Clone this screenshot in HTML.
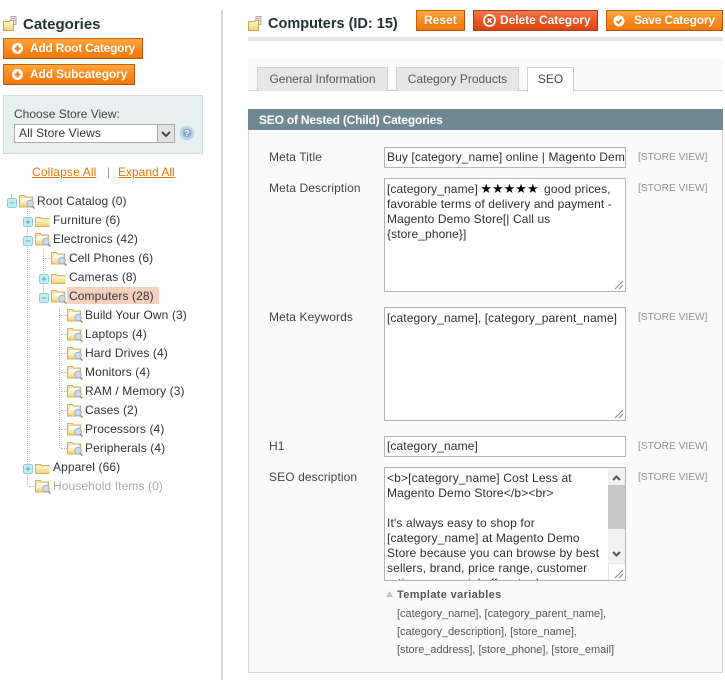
<!DOCTYPE html>
<html><head><meta charset="utf-8"><style>
html,body{margin:0;padding:0;background:#fff}
body{width:725px;height:680px;position:relative;overflow:hidden;font:12px/15px "Liberation Sans",sans-serif;color:#444}
.a{position:absolute;white-space:nowrap}
.btn{position:absolute;box-sizing:border-box;height:21px;background:linear-gradient(#ffa63f,#f88a1e 50%,#f07a0a);border:1px solid #c0600f;border-right-color:#a9530e;border-bottom-color:#a9530e;color:#fff;font-weight:bold;font-size:12px;line-height:17px;white-space:nowrap;text-shadow:0 0 1px #e87a10}
.btn svg{position:absolute;top:3px}
.btn span{position:absolute;top:1px}
.red{background:linear-gradient(#f6794e,#e9541f 55%,#de4513);border-color:#a63a12;text-shadow:0 0 1px #d9481a}
.t{position:absolute;white-space:nowrap;color:#333;line-height:15px;font-size:12px;margin-top:1px;letter-spacing:.1px}
.lb{position:absolute;left:269px;color:#444;white-space:nowrap;margin-top:1px;letter-spacing:.1px}
.sv{position:absolute;left:638px;color:#8a9499;font-size:10.200px;white-space:nowrap;margin-top:1px}
.in{position:absolute;left:384px;width:242px;box-sizing:border-box;background:#fff;border:1px solid #b5b5b5;padding:0 2px;color:#2f2f2f;font-size:12px;line-height:15px;overflow:hidden;letter-spacing:.1px}
.tab{position:absolute;top:67px;height:24px;box-sizing:border-box;background:#e6e6e6;border:1px solid #d0d0d0;border-bottom:0;color:#555;text-align:center;line-height:22px}
.grip{position:absolute;right:1px;bottom:1px}
.dv{position:absolute;border-left:1px dotted #b9b9b9}
.dh{position:absolute;border-top:1px dotted #b9b9b9}
</style></head><body>
<svg width="0" height="0" style="position:absolute"><defs>
<linearGradient id="fg" x1="0" y1="0" x2="0" y2="1"><stop offset="0" stop-color="#fff8d8"/><stop offset="1" stop-color="#f5d26e"/></linearGradient>
<symbol id="open" viewBox="0 0 16 16"><path d="M.5 2.500h5l1 1.500h7v10H.500z" fill="#f5e2ab" stroke="#cfb26a"/><path d="M2.500 5h9v2.500h-9z" fill="#fff"/><path d="M1 7.500h12.500v6H1z" fill="url(#fg)"/><path d="M13 13l2.500 2.500" stroke="#a58a5a" stroke-width="1.500"/><circle cx="11" cy="10.500" r="3.300" fill="#c9dcf0" stroke="#9db2c8"/></symbol>
<symbol id="closed" viewBox="0 0 16 16"><path d="M.5 5.500h5l1 1h7.500v8H.500z" fill="#f5e2ab" stroke="#cfb26a"/><path d="M1 7.500h13.500v6.500H1z" fill="url(#fg)"/></symbol>
<symbol id="plus" viewBox="0 0 11 11"><rect x=".5" y=".5" width="10" height="10" rx="2" fill="#c5ecf2" stroke="#7fcbd8"/><path d="M3 5.500h5M5.500 3v5" stroke="#55a5b5"/></symbol>
<symbol id="minus" viewBox="0 0 11 11"><rect x=".5" y=".5" width="10" height="10" rx="2" fill="#c5ecf2" stroke="#7fcbd8"/><path d="M3 5.500h5" stroke="#55a5b5"/></symbol>
<symbol id="head" viewBox="0 0 15 16"><path d="M8 1.500h5v8H8z" fill="#e4e4e4" stroke="#aaa"/><path d="M9 3.500h3M9 5.500h3" stroke="#aaa"/><path d="M.5 6.500h6l1-1h3v10H.5z" fill="url(#fg)" stroke="#c9a555"/></symbol>
</defs></svg>

<!-- Left column -->
<svg class="a" style="left:3px;top:15px" width="15" height="16"><use href="#head"/></svg>
<div class="a" style="left:23px;top:16px;font:bold 15px/18px 'Liberation Sans',sans-serif;color:#253033">Categories</div>
<div class="btn" style="left:3px;top:38px;width:140px"><svg style="left:7px" width="13" height="13"><circle cx="6.500" cy="6.500" r="5.500" fill="#fff"/><path d="M3.500 6.500h6M6.500 3.500v6" stroke="#ef7a10" stroke-width="2"/></svg><span style="left:26px;letter-spacing:-.25px">Add Root Category</span></div>
<div class="btn" style="left:3px;top:64px;width:132px"><svg style="left:7px" width="13" height="13"><circle cx="6.500" cy="6.500" r="5.500" fill="#fff"/><path d="M3.500 6.500h6M6.500 3.500v6" stroke="#ef7a10" stroke-width="2"/></svg><span style="left:26px;letter-spacing:-.15px">Add Subcategory</span></div>

<div class="a" style="left:3px;top:95px;width:198px;height:57px;background:#e7efef;border:1px solid #d3dcdc"></div>
<div class="a" style="left:14px;top:107px;color:#444">Choose Store View:</div>
<div class="a" style="left:14px;top:124px;width:161px;height:19px;box-sizing:border-box;background:#fff;border:1px solid #aaa;line-height:17px;padding-left:4px;color:#333;letter-spacing:.1px">All Store Views
<div style="position:absolute;right:0;top:0;width:17px;height:17px;background:#e2e2e2;border-left:1px solid #aaa;box-sizing:border-box"><svg width="16" height="17" style="display:block"><path d="M4 7l4 4 4-4" fill="none" stroke="#444" stroke-width="2"/></svg></div></div>
<svg class="a" style="left:180px;top:126px" width="15" height="15"><circle cx="7" cy="7" r="6.500" fill="#c3d8ec" stroke="#b3cde6"/><circle cx="7" cy="7" r="4.500" fill="#88acd2"/><text x="7" y="10" font-size="8" font-weight="bold" text-anchor="middle" fill="#fff" font-family="Liberation Sans">?</text></svg>

<div class="a" style="left:32px;top:165px;color:#ea7601;text-decoration:underline;letter-spacing:.15px">Collapse All</div>
<div class="a" style="left:107px;top:165px;color:#8a9ba3">|</div>
<div class="a" style="left:118px;top:165px;color:#ea7601;text-decoration:underline">Expand All</div>

<div class="a" style="left:221px;top:10px;width:2px;height:670px;background:#d8d8d8"></div>

<!-- Tree lines -->
<div class="dv" style="left:11px;top:194px;height:4px"></div>
<div class="dv" style="left:27px;top:206px;height:280px"></div>
<div class="dv" style="left:43px;top:250px;height:45px"></div>
<div class="dh" style="left:45px;top:258px;width:6px"></div>
<div class="dv" style="left:59px;top:307px;height:141px"></div>
<div class="dh" style="left:61px;top:315px;width:6px"></div><div class="dh" style="left:61px;top:334px;width:6px"></div><div class="dh" style="left:61px;top:353px;width:6px"></div><div class="dh" style="left:61px;top:372px;width:6px"></div><div class="dh" style="left:61px;top:391px;width:6px"></div><div class="dh" style="left:61px;top:410px;width:6px"></div><div class="dh" style="left:61px;top:429px;width:6px"></div><div class="dh" style="left:61px;top:448px;width:6px"></div>
<div class="dh" style="left:29px;top:486px;width:6px"></div>

<!-- Tree nodes -->
<svg class="a" style="left:7px;top:198px" width="10" height="10"><use href="#minus"/></svg>
<svg class="a" style="left:19px;top:193px" width="16" height="16"><use href="#open"/></svg><div class="t" style="left:37px;top:193px">Root Catalog (0)</div>
<svg class="a" style="left:23px;top:217px" width="10" height="10"><use href="#plus"/></svg>
<svg class="a" style="left:35px;top:212px" width="16" height="16"><use href="#closed"/></svg><div class="t" style="left:53px;top:212px">Furniture (6)</div>
<svg class="a" style="left:23px;top:236px" width="10" height="10"><use href="#minus"/></svg>
<svg class="a" style="left:35px;top:231px" width="16" height="16"><use href="#open"/></svg><div class="t" style="left:53px;top:231px">Electronics (42)</div>
<svg class="a" style="left:51px;top:250px" width="16" height="16"><use href="#open"/></svg><div class="t" style="left:69px;top:250px">Cell Phones (6)</div>
<svg class="a" style="left:39px;top:274px" width="10" height="10"><use href="#plus"/></svg>
<svg class="a" style="left:51px;top:269px" width="16" height="16"><use href="#closed"/></svg><div class="t" style="left:69px;top:269px">Cameras (8)</div>
<svg class="a" style="left:39px;top:293px" width="10" height="10"><use href="#minus"/></svg>
<div class="a" style="left:67px;top:287px;width:92px;height:17px;background:#f5d0bf"></div><svg class="a" style="left:51px;top:288px" width="16" height="16"><use href="#open"/></svg><div class="t" style="left:69px;top:288px">Computers (28)</div>
<svg class="a" style="left:67px;top:307px" width="16" height="16"><use href="#open"/></svg><div class="t" style="left:85px;top:307px">Build Your Own (3)</div>
<svg class="a" style="left:67px;top:326px" width="16" height="16"><use href="#open"/></svg><div class="t" style="left:85px;top:326px">Laptops (4)</div>
<svg class="a" style="left:67px;top:345px" width="16" height="16"><use href="#open"/></svg><div class="t" style="left:85px;top:345px">Hard Drives (4)</div>
<svg class="a" style="left:67px;top:364px" width="16" height="16"><use href="#open"/></svg><div class="t" style="left:85px;top:364px">Monitors (4)</div>
<svg class="a" style="left:67px;top:383px" width="16" height="16"><use href="#open"/></svg><div class="t" style="left:85px;top:383px">RAM / Memory (3)</div>
<svg class="a" style="left:67px;top:402px" width="16" height="16"><use href="#open"/></svg><div class="t" style="left:85px;top:402px">Cases (2)</div>
<svg class="a" style="left:67px;top:421px" width="16" height="16"><use href="#open"/></svg><div class="t" style="left:85px;top:421px">Processors (4)</div>
<svg class="a" style="left:67px;top:440px" width="16" height="16"><use href="#open"/></svg><div class="t" style="left:85px;top:440px">Peripherals (4)</div>
<svg class="a" style="left:23px;top:464px" width="10" height="10"><use href="#plus"/></svg>
<svg class="a" style="left:35px;top:459px" width="16" height="16"><use href="#closed"/></svg><div class="t" style="left:53px;top:459px">Apparel (66)</div>
<svg class="a" style="left:35px;top:478px" width="16" height="16"><use href="#open"/></svg><div class="t" style="left:53px;top:478px;color:#aaa">Household Items (0)</div>

<!-- Right header -->
<svg class="a" style="left:248px;top:15px" width="15" height="16"><use href="#head"/></svg>
<div class="a" style="left:268px;top:15px;font:bold 14.500px/18px 'Liberation Sans',sans-serif;color:#253033">Computers (ID: 15)</div>
<div class="btn" style="left:416px;top:10px;width:49px"><span style="left:7px">Reset</span></div>
<div class="btn red" style="left:473px;top:10px;width:125px"><svg style="left:8px;top:2px" width="15" height="15"><circle cx="7.500" cy="7.500" r="6.500" fill="#fff" fill-opacity=".9"/><circle cx="7.500" cy="7.500" r="4.500" fill="#d9481a"/><path d="M5.500 5.500l4 4M9.500 5.500l-4 4" stroke="#fff" stroke-width="1.600"/></svg><span style="left:26px;letter-spacing:-.05px">Delete Category</span></div>
<div class="btn" style="left:606px;top:10px;width:117px"><svg style="left:6px;top:4px" width="12" height="12"><circle cx="6" cy="6" r="5.500" fill="#fff"/><path d="M3.500 6l2 2 3-3.500" fill="none" stroke="#ef7a10" stroke-width="1.800"/></svg><span style="left:27px;letter-spacing:-.2px">Save Category</span></div>
<div class="a" style="left:248px;top:37px;width:475px;height:4px;background:#e3e3e3"></div>

<!-- Tabs -->
<div class="a" style="left:248px;top:59px;width:475px;height:31px;background:#fafafa"></div>
<div class="a" style="left:248px;top:90px;width:475px;height:1px;background:#cfcfcf"></div>
<div class="tab" style="left:257px;width:131px">General Information</div>
<div class="tab" style="left:396px;width:123px">Category Products</div>
<div class="tab" style="left:527px;width:47px;background:#fff;color:#444;height:25px">SEO</div>

<!-- Section -->
<div class="a" style="left:248px;top:130px;width:475px;height:543px;box-sizing:border-box;background:#fafafa;border:1px solid #d6d6d6;border-top:0"></div>
<div class="a" style="left:248px;top:109px;width:475px;height:21px;background:#6f8992;color:#fff;font-weight:bold;line-height:22px;padding-left:11px;box-sizing:border-box;letter-spacing:-.2px">SEO of Nested (Child) Categories</div>

<div class="lb" style="top:149px">Meta Title</div>
<div class="in" style="top:147px;height:21px;line-height:19px;white-space:nowrap">Buy [category_name] online | Magento Demo Store</div>
<div class="sv" style="top:149px">[STORE VIEW]</div>

<div class="lb" style="top:180px">Meta Description</div>
<div class="in" style="top:178px;height:114px;padding-top:3px">[category_name] <span style="color:#000;font-size:13px;line-height:0;font-family:'DejaVu Sans',sans-serif;letter-spacing:0;margin-left:-1px;margin-right:2px">★★★★★</span> good prices,<br>favorable terms of delivery and payment -<br>Magento Demo Store[| Call us<br>{store_phone}]
<svg class="grip" width="11" height="11"><path d="M2 10l8-8M6 10l4-4" stroke="#888"/></svg></div>
<div class="sv" style="top:180px">[STORE VIEW]</div>

<div class="lb" style="top:309px">Meta Keywords</div>
<div class="in" style="top:307px;height:114px;padding-top:3px">[category_name], [category_parent_name]
<svg class="grip" width="11" height="11"><path d="M2 10l8-8M6 10l4-4" stroke="#888"/></svg></div>
<div class="sv" style="top:309px">[STORE VIEW]</div>

<div class="lb" style="top:438px">H1</div>
<div class="in" style="top:436px;height:21px;line-height:19px">[category_name]</div>
<div class="sv" style="top:438px">[STORE VIEW]</div>

<div class="lb" style="top:469px">SEO description</div>
<div class="in" style="top:467px;height:114px;padding-top:3px;padding-right:20px;white-space:nowrap;letter-spacing:.15px">&lt;b&gt;[category_name] Cost Less at<br>Magento Demo Store&lt;/b&gt;&lt;br&gt;<br><br>It's always easy to shop for<br>[category_name] at Magento Demo<br>Store because you can browse by best<br>sellers, brand, price range, customer<br>ratings or special offers to denom
<div style="position:absolute;right:0;top:0;width:17px;height:95px;background:#f1f1f1"><div style="position:absolute;left:0;top:17px;width:17px;height:44px;background:#c8c8c8"></div><svg width="17" height="95" style="position:absolute;left:0;top:0"><path d="M5 12l3.500-3.500L12 12M5 84l3.500 3.500L12 84" fill="none" stroke="#555" stroke-width="2"/></svg></div>
<div style="position:absolute;right:0;bottom:0;width:17px;height:17px;background:#fff;border-left:1px solid #e5e5e5;border-top:1px solid #e5e5e5;box-sizing:border-box"></div>
<svg class="grip" width="11" height="11"><path d="M2 10l8-8M6 10l4-4" stroke="#888"/></svg></div>
<div class="sv" style="top:469px">[STORE VIEW]</div>

<svg class="a" style="left:386px;top:591px" width="7" height="6"><path d="M0 6L3.500 0 7 6z" fill="#b7c6cc"/></svg>
<div class="a" style="left:397px;top:588px;font-weight:bold;font-size:11px;color:#555;letter-spacing:.35px">Template variables</div>
<div class="a" style="left:397px;top:605px;font-size:10.950px;line-height:18px;color:#555">[category_name], [category_parent_name],<br>[category_description], [store_name],<br>[store_address], [store_phone], [store_email]</div>
</body></html>
